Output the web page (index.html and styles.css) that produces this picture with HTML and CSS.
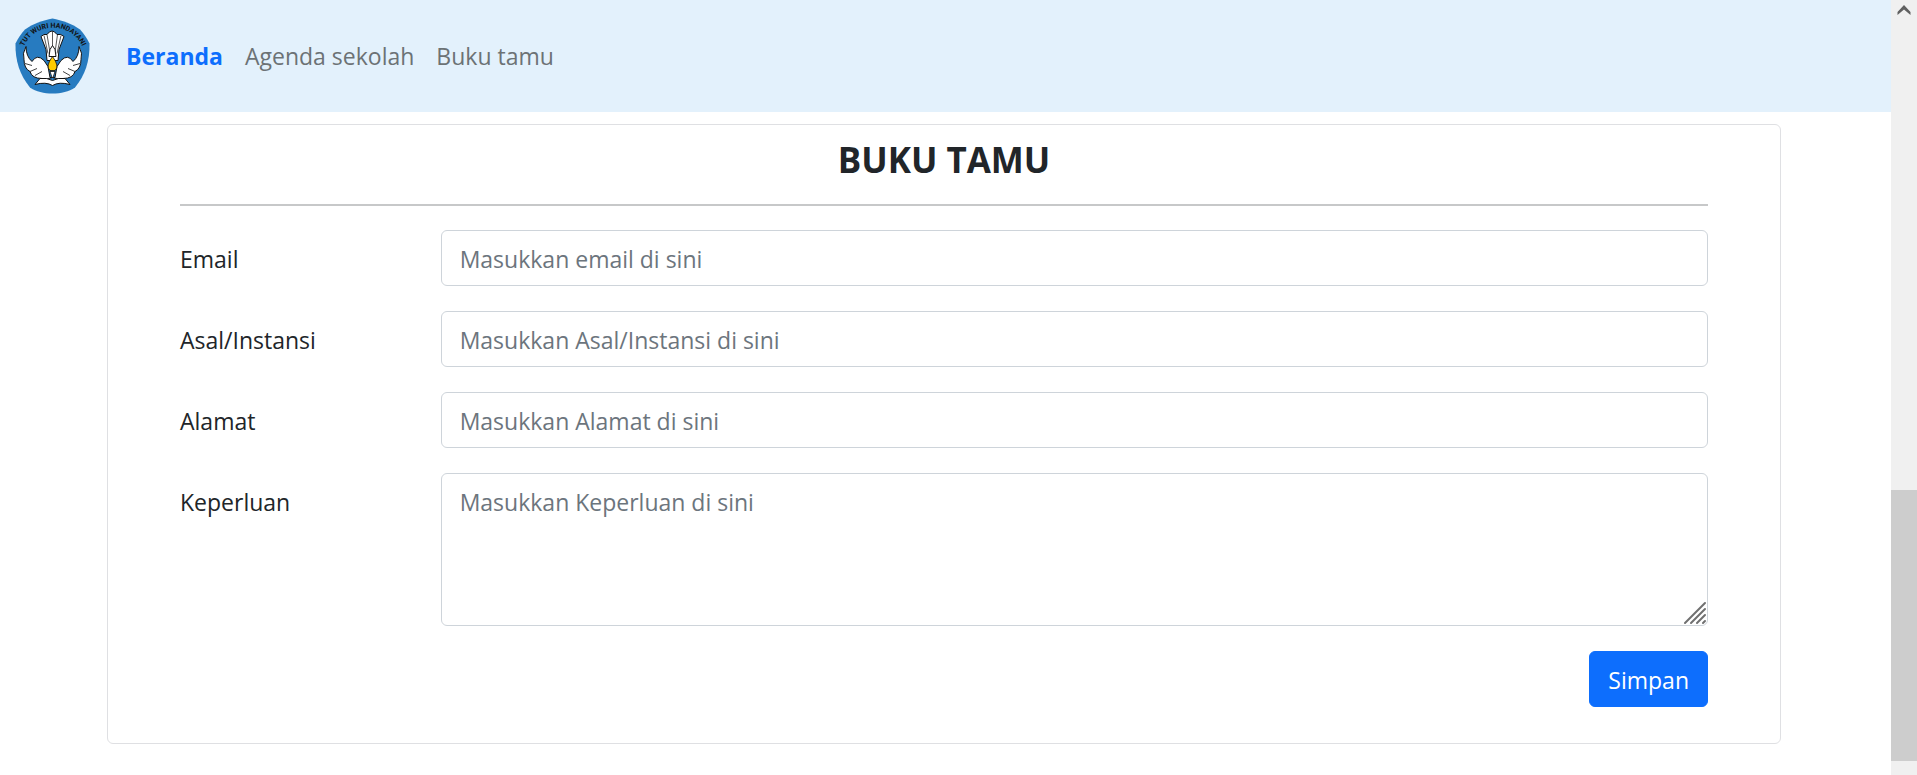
FILE: index.html
```html
<!DOCTYPE html>
<html lang="id">
<head>
<meta charset="utf-8">
<meta name="viewport" content="width=device-width, initial-scale=1">
<title>Buku Tamu</title>
<link rel="stylesheet" href="styles.css">
</head>
<body>
<div class="page">
  <header class="navbar">
    <a class="brand" href="#" aria-label="Tut Wuri Handayani">
      <svg class="logo" viewBox="0 0 75 75" aria-hidden="true">
        <path d="M37.500 0C47 2 57 5 65 11C69 15 72 20 74.500 25C75 42 70 57 60 69C54 73 46 75 37.500 75C29 75 21 73 15 69C5 57 0 42 .5 25C3 20 6 15 10 11C18 5 28 2 37.500 0Z" fill="#277bc0"/>
        <path id="motto" d="M8 30A32 32 0 0 1 68 30" fill="none"/>
        <text class="motto"><textPath href="#motto" startOffset="50%" text-anchor="middle">TUT WURI HANDAYANI</textPath></text>
        <g fill="#fff" stroke="#111" stroke-width="1" stroke-linejoin="round">
          <path d="M32 42L31 31L26 18Q29 15 32 16Q37 9 42 16Q46 15 49 18L44 31L43 42Z"/>
          <path d="M37.500 13V28M32 16L35 34M42.500 16L40 34M29 17L33 35M46 17L42 35" fill="none" stroke-width=".7"/>
          <path d="M35 59L33 48L29 42Q22 35 17 43Q11 38 11 28Q7 35 9 41Q9 50 15 53Q17 60 27 60Q32 61 37.500 59Z"/>
          <path d="M40 59L42 48L46 42Q53 35 58 43Q64 38 64 28Q68 35 66 41Q66 50 60 53Q58 60 48 60Q43 61 37.500 59Z"/>
          <path d="M10 45L17 47M15 53L22 50M20 57L27 53M65 45L58 47M60 53L53 50M55 57L48 53" fill="none" stroke-width=".8"/>
          <path d="M20 66L25 60Q32 59 37.500 62Q43 59 50 60L55 66Q44 63 37.500 67Q31 63 20 66Z"/>
          <path d="M34 38L35 31L37.500 27L40 31L41 38Z"/>
        </g>
        <path d="M37.500 38Q45 48 40 52H35Q30 48 37.500 38Z" fill="#fc0" stroke="#111" stroke-width=".8"/>
        <path d="M35 53H40L38 59H37Z" fill="#fff" stroke="#111" stroke-width=".8"/>
      </svg>
    </a>
    <nav class="nav">
      <a class="nav-link nav-link-active" href="#">Beranda</a>
      <a class="nav-link" href="#">Agenda sekolah</a>
      <a class="nav-link" href="#">Buku tamu</a>
    </nav>
  </header>
  <main class="content">
    <form class="card">
      <h1 class="title">BUKU TAMU</h1>
      <hr class="rule">
      <div class="row">
        <label class="label" for="email">Email</label>
        <div class="field"><input class="control" id="email" type="email" placeholder="Masukkan email di sini"></div>
      </div>
      <div class="row">
        <label class="label" for="asal">Asal/Instansi</label>
        <div class="field"><input class="control" id="asal" type="text" placeholder="Masukkan Asal/Instansi di sini"></div>
      </div>
      <div class="row">
        <label class="label" for="alamat">Alamat</label>
        <div class="field"><input class="control" id="alamat" type="text" placeholder="Masukkan Alamat di sini"></div>
      </div>
      <div class="row">
        <label class="label" for="keperluan">Keperluan</label>
        <div class="field">
          <textarea class="control area" id="keperluan" rows="3" placeholder="Masukkan Keperluan di sini"></textarea>
          <svg class="grip" viewBox="0 0 24 24" aria-hidden="true"><path d="M2 22L22 2M8 22L22 8M14 22L22 14M20 22L22 20"/></svg>
        </div>
      </div>
      <div class="actions"><button class="button" type="submit">Simpan</button></div>
    </form>
  </main>
</div>
<div class="scrollbar" aria-hidden="true">
  <svg class="scroll-up" viewBox="0 0 26 26"><path d="M6.500 15V12L13 5L19.500 12V15L13 9.500Z"/></svg>
  <div class="thumb"></div>
</div>
</body>
</html>
```
FILE: styles.css
```css
* { box-sizing: border-box; }

body {
  display: flex;
  min-height: 100vh;
  margin: 0;
  background: #fff;
  color: #212529;
  font-family: "Segoe UI", "Open Sans", "Noto Sans", sans-serif;
  font-size: 23px;
  line-height: 36px;
}

.page { flex: 1; }

.navbar {
  display: flex;
  align-items: center;
  gap: 36px;
  padding: 18px 15px;
  background: #e3f1fc;
}

.brand { display: flex; }
.logo { width: 75px; height: 76px; }
.motto {
  fill: #111;
  font-family: Roboto, sans-serif;
  font-size: 7px;
  font-weight: 700;
}

.nav { display: flex; gap: 22px; }
.nav-link { color: #6c7275; text-decoration: none; }
.nav-link-active { color: #0d6efd; font-weight: 700; }

.content { padding: 12px 110px 31px 107px; }

.card {
  margin: 0;
  padding: 12px 72px 36px;
  border: 1px solid #dfe0e3;
  border-radius: 6px;
}

.title {
  margin: 0;
  font-size: 35px;
  line-height: 46px;
  text-align: center;
}

.rule {
  height: 2px;
  margin: 21px 0 24px;
  border: 0;
  background: #c7c8c9;
}

.row {
  display: grid;
  grid-template-columns: repeat(6, 1fr);
  column-gap: 36px;
  margin-bottom: 25px;
}

.label { padding: 11px 0 9px; }

.field {
  position: relative;
  display: flex;
  grid-column: span 5;
}

.control {
  width: 100%;
  margin: 0;
  padding: 10px 18px 8px;
  border: 1px solid #ced4da;
  border-radius: 6px;
  background: #fff;
  color: #212529;
  font: inherit;
}

.control::placeholder { color: #6c757d; opacity: 1; }

.area {
  min-height: 153px;
  resize: none;
}

.grip {
  position: absolute;
  right: 1px;
  bottom: 1px;
  width: 24px;
  height: 24px;
  fill: none;
  stroke: #707070;
  stroke-linecap: round;
  stroke-width: 2;
  pointer-events: none;
}

.actions { display: flex; justify-content: flex-end; }

.button {
  padding: 10px 18px 8px;
  border: 1px solid #0d6efd;
  border-radius: 6px;
  background: #0d6efd;
  color: #fff;
  font: inherit;
}

.scrollbar {
  display: grid;
  grid-template-rows: 490fr 271fr 14fr;
  width: 26px;
  background: #f0f0f0;
}

.scroll-up { width: 26px; height: 26px; fill: #606060; }
.thumb { background: #cdcdcd; }
```
